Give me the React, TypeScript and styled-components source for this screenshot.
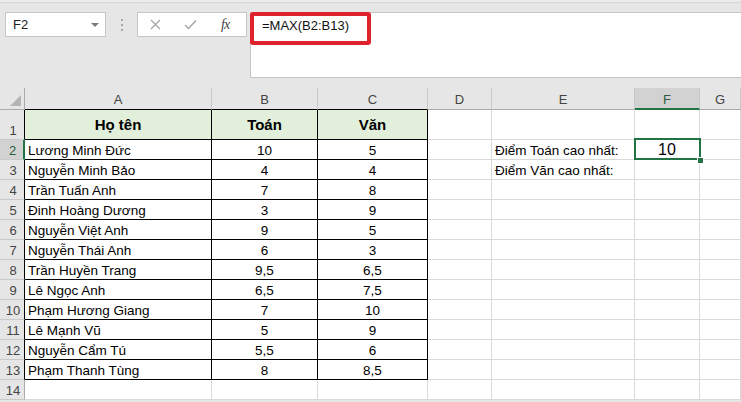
import React from "react";
import styled, { createGlobalStyle, css } from "styled-components";

const Global = createGlobalStyle`
  html, body { margin: 0; padding: 0; background: #ffffff; }
  body { font-family: "Liberation Sans", Arial, sans-serif; overflow: hidden; }
`;

const Page = styled.div`
  width: 741px;
  height: 402px;
  overflow: hidden;
  background: #e6e6e6;
  display: flex;
  flex-direction: column;
`;

const TopStrip = styled.div`
  height: 3px;
  background: #ececec;
  border-bottom: 1px solid #d6d6d6;
  box-sizing: border-box;
`;

const FormulaBar = styled.div`
  height: 85px;
  box-sizing: border-box;
  padding: 9px 0 10px 5px;
  display: flex;
  align-items: flex-start;
  background: #e6e6e6;
`;

const NameBox = styled.div`
  width: 101px;
  height: 25px;
  box-sizing: border-box;
  background: #ffffff;
  border: 1px solid #c6c6c6;
  display: flex;
  align-items: center;
  justify-content: space-between;
  padding: 0 6px 0 7px;
  font-size: 13px;
  color: #222;
`;

const DropArrow = styled.span`
  width: 0;
  height: 0;
  border-left: 4px solid transparent;
  border-right: 4px solid transparent;
  border-top: 4px solid #7a7a7a;
`;

const Dots = styled.div`
  width: 31px;
  height: 25px;
  display: flex;
  flex-direction: column;
  align-items: center;
  justify-content: center;
  gap: 3px;
  span {
    width: 2px;
    height: 2px;
    background: #a8a8a8;
  }
`;

const ButtonBox = styled.div`
  width: 110px;
  height: 25px;
  box-sizing: border-box;
  background: #ffffff;
  border: 1px solid #c6c6c6;
  display: flex;
  align-items: center;
  padding-left: 12px;
`;

const IconSlot = styled.div<{ $w: number }>`
  width: ${(p) => p.$w}px;
  height: 23px;
  display: flex;
  align-items: center;
  justify-content: flex-start;
`;

const Fx = styled.span`
  font-family: "Liberation Serif", "Times New Roman", serif;
  font-style: italic;
  font-size: 14px;
  color: #444;
  letter-spacing: -1px;
`;

const FormulaInput = styled.div`
  position: relative;
  flex: 1;
  margin-left: 3px;
  height: 66px;
  box-sizing: border-box;
  background: #ffffff;
  border: 1px solid #c6c6c6;
  border-right: none;
  padding: 5px 0 0 11px;
  font-size: 13px;
  color: #111;
`;

const RedMark = styled.div`
  position: absolute;
  left: -1px;
  top: -1px;
  width: 121px;
  height: 33px;
  box-sizing: border-box;
  border: 4px solid #e0222c;
  border-radius: 3px;
`;

const Sheet = styled.div`
  display: grid;
  grid-template-columns: 25px 187px 106px 110px 64px 143px 65px 1fr;
  grid-template-rows: 22px 30px repeat(13, 20px);
  background: #ffffff;
`;

const ColHead = styled.div<{ $sel?: boolean; $dark?: boolean }>`
  box-sizing: border-box;
  background: ${(p) => (p.$sel ? "#d2d2d2" : "#e6e6e6")};
  border-right: 1px solid #c9c9c9;
  border-bottom: ${(p) =>
    p.$sel ? "2px solid #217346" : p.$dark ? "1px solid #000" : "1px solid #ababab"};
  display: flex;
  align-items: center;
  justify-content: center;
  font-size: 13px;
  color: ${(p) => (p.$sel ? "#305c40" : "#444")};
  padding-top: 2px;
`;

const Corner = styled.div`
  position: relative;
  box-sizing: border-box;
  background: #e6e6e6;
  border-right: 1px solid #ababab;
  border-bottom: 1px solid #ababab;
  &::after {
    content: "";
    position: absolute;
    right: 3px;
    bottom: 3px;
    width: 0;
    height: 0;
    border-left: 11px solid transparent;
    border-bottom: 11px solid #b4b4b4;
  }
`;

const RowHead = styled.div<{ $sel?: boolean; $dark?: boolean }>`
  box-sizing: border-box;
  background: ${(p) => (p.$sel ? "#d2d2d2" : "#e6e6e6")};
  border-bottom: 1px solid #c9c9c9;
  border-right: ${(p) =>
    p.$sel ? "2px solid #217346" : p.$dark ? "1px solid #000" : "1px solid #ababab"};
  display: flex;
  align-items: flex-end;
  justify-content: center;
  padding-bottom: 1px;
  font-size: 13px;
  color: ${(p) => (p.$sel ? "#305c40" : "#444")};
  padding-left: 2px;
`;

const Cell = styled.div<{
  $table?: boolean;
  $center?: boolean;
  $head?: boolean;
  $big?: boolean;
}>`
  position: relative;
  box-sizing: border-box;
  border-right: 1px solid ${(p) => (p.$table ? "#000" : "#d9d9d9")};
  border-bottom: 1px solid ${(p) => (p.$table ? "#000" : "#d9d9d9")};
  display: flex;
  align-items: center;
  justify-content: ${(p) => (p.$center ? "center" : "flex-start")};
  padding: 1px 3px 0 3px;
  font-size: ${(p) => (p.$big ? "16px" : "13.5px")};
  color: #000;
  white-space: nowrap;
  ${(p) =>
    p.$head &&
    css`
      background: #e2efda;
      font-weight: bold;
      font-size: 15px;
      padding-top: 0;
    `}
`;

const SelFrame = styled.div`
  position: absolute;
  left: -1px;
  top: -2px;
  right: -2px;
  bottom: -1px;
  border: 2px solid #217346;
  pointer-events: none;
  z-index: 1;
`;

const FillHandle = styled.div`
  position: absolute;
  right: -5px;
  bottom: -5px;
  width: 7px;
  height: 7px;
  box-sizing: border-box;
  background: #217346;
  border: 1px solid #ffffff;
  z-index: 2;
`;

const cols = ["A", "B", "C", "D", "E", "F", "G"];

const data: [string, string, string][] = [
  ["Lương Minh Đức", "10", "5"],
  ["Nguyễn Minh Bảo", "4", "4"],
  ["Trần Tuấn Anh", "7", "8"],
  ["Đinh Hoàng Dương", "3", "9"],
  ["Nguyễn Việt Anh", "9", "5"],
  ["Nguyễn Thái Anh", "6", "3"],
  ["Trần Huyền Trang", "9,5", "6,5"],
  ["Lê Ngọc Anh", "6,5", "7,5"],
  ["Phạm Hương Giang", "7", "10"],
  ["Lê Mạnh Vũ", "5", "9"],
  ["Nguyễn Cẩm Tú", "5,5", "6"],
  ["Phạm Thanh Tùng", "8", "8,5"],
];

const sideLabels: Record<number, string> = {
  2: "Điểm Toán cao nhất:",
  3: "Điểm Văn cao nhất:",
};

export default function App() {
  const rows: React.ReactNode[] = [];

  rows.push(
    <React.Fragment key="r1">
      <RowHead $dark>1</RowHead>
      <Cell $table $head $center>Họ tên</Cell>
      <Cell $table $head $center>Toán</Cell>
      <Cell $table $head $center>Văn</Cell>
      <Cell />
      <Cell />
      <Cell />
      <Cell />
    </React.Fragment>
  );

  data.forEach((d, i) => {
    const r = i + 2;
    rows.push(
      <React.Fragment key={`r${r}`}>
        <RowHead $sel={r === 2} $dark>{r}</RowHead>
        <Cell $table>{d[0]}</Cell>
        <Cell $table $center>{d[1]}</Cell>
        <Cell $table $center>{d[2]}</Cell>
        <Cell />
        <Cell>{sideLabels[r] ?? ""}</Cell>
        {r === 2 ? (
          <Cell $center $big>
            10
            <SelFrame />
            <FillHandle />
          </Cell>
        ) : (
          <Cell />
        )}
        <Cell />
      </React.Fragment>
    );
  });

  rows.push(
    <React.Fragment key="r14">
      <RowHead>14</RowHead>
      {cols.map((c) => (
        <Cell key={c} />
      ))}
    </React.Fragment>
  );

  return (
    <>
      <Global />
      <Page>
        <TopStrip />
        <FormulaBar>
          <NameBox>
            <span>F2</span>
            <DropArrow />
          </NameBox>
          <Dots>
            <span />
            <span />
            <span />
          </Dots>
          <ButtonBox>
            <IconSlot $w={34}>
              <svg width="11" height="11" viewBox="0 0 11 11">
                <path d="M1 1 L10 10 M10 1 L1 10" stroke="#a6a6a6" strokeWidth="1.3" fill="none" />
              </svg>
            </IconSlot>
            <IconSlot $w={37}>
              <svg width="13" height="11" viewBox="0 0 13 11">
                <path d="M1 6 L4.5 9.5 L12 1.5" stroke="#a6a6a6" strokeWidth="1.4" fill="none" />
              </svg>
            </IconSlot>
            <IconSlot $w={20}>
              <Fx>fx</Fx>
            </IconSlot>
          </ButtonBox>
          <FormulaInput>
            =MAX(B2:B13)
            <RedMark />
          </FormulaInput>
        </FormulaBar>
        <Sheet>
          <Corner />
          {cols.map((c, i) => (
            <ColHead key={c} $sel={c === "F"} $dark={i < 3}>
              {c}
            </ColHead>
          ))}
          {rows}
        </Sheet>
      </Page>
    </>
  );
}
